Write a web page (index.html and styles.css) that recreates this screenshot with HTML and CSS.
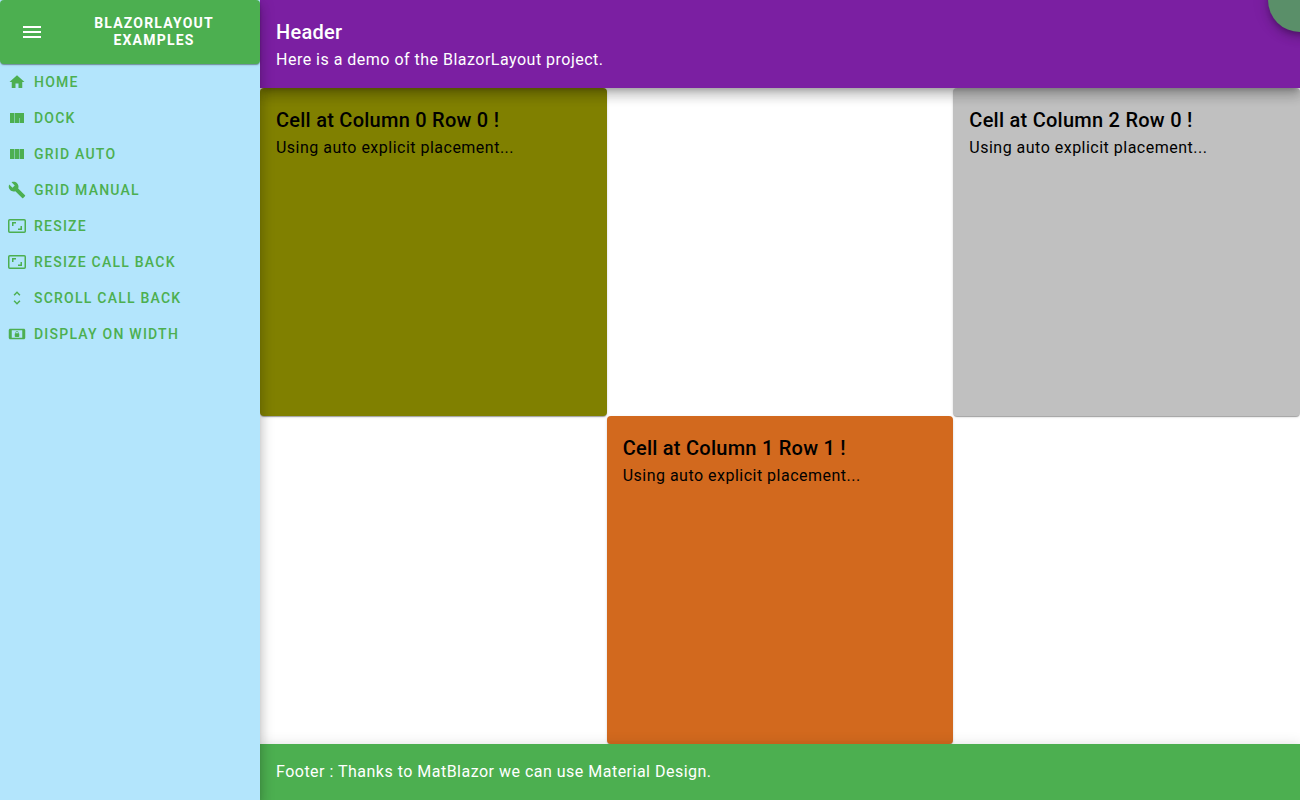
FILE: index.html
```html
<!DOCTYPE html>
<html lang="en">
<head>
<meta charset="utf-8">
<title>BlazorLayout Examples</title>
<link rel="stylesheet" href="styles.css">
</head>
<body>
<div class="app">
  <aside class="drawer">
    <div class="brand">
      <svg class="menu-icon" viewBox="0 0 24 24"><path d="M3 18h18v-2H3v2zm0-5h18v-2H3v2zm0-7v2h18V6H3z"/></svg>
      <div class="brand-title">BlazorLayout Examples</div>
    </div>
    <nav class="nav">
      <a class="nav-item"><svg viewBox="0 0 24 24"><path d="M10 20v-6h4v6h5v-8h3L12 3 2 12h3v8z"/></svg>Home</a>
      <a class="nav-item"><svg viewBox="0 0 18 18"><path d="M2 4h4.500v10H2zM7 4h9v10h-4.300V9h-.5v5H7z"/></svg>Dock</a>
      <a class="nav-item"><svg viewBox="0 0 18 18"><path d="M2 4h4.500v10H2zM7 4h4.200v10H7zM11.700 4H16v10h-4.300z"/></svg>Grid Auto</a>
      <a class="nav-item"><svg viewBox="0 0 24 24"><path d="M22.7 19l-9.1-9.1c.9-2.3.4-5-1.5-6.9-2-2-5-2.4-7.4-1.3L9 6 6 9 1.6 4.7C.4 7.1.9 10.1 2.9 12.1c1.9 1.9 4.6 2.4 6.9 1.5l9.1 9.1c.4.4 1 .4 1.4 0l2.3-2.3c.5-.4.5-1.1.1-1.4z"/></svg>Grid Manual</a>
      <a class="nav-item"><svg viewBox="0 0 18 18"><rect class="frame" x=".75" y="2.750" width="16.500" height="12.500" rx="1"/><path d="M4 5h4v1.500H5.500V9H4zM14 13h-4v-1.500h2.500V9H14z"/></svg>Resize</a>
      <a class="nav-item"><svg viewBox="0 0 18 18"><rect class="frame" x=".75" y="2.750" width="16.500" height="12.500" rx="1"/><path d="M4 5h4v1.500H5.500V9H4zM14 13h-4v-1.500h2.500V9H14z"/></svg>Resize Call Back</a>
      <a class="nav-item"><svg viewBox="0 0 24 24"><path d="M12 5.830L15.170 9l1.410-1.410L12 3 7.410 7.590 8.830 9 12 5.830zm0 12.340L8.830 15l-1.410 1.410L12 21l4.590-4.590L15.170 15 12 18.170z"/></svg>Scroll Call Back</a>
      <a class="nav-item"><svg viewBox="0 0 24 24"><path d="M10 16h4c.55 0 1-.45 1-1v-3c0-.55-.45-1-1-1v-1c0-1.110-.9-2-2-2s-2 .89-2 2v1c-.55 0-1 .45-1 1v3c0 .55.45 1 1 1zm.8-6c0-.66.54-1.200 1.200-1.200s1.200.54 1.200 1.200v1h-2.400v-1zM21 5H3c-1.100 0-2 .9-2 2v10c0 1.100.9 2 2 2h18c1.100 0 2-.9 2-2V7c0-1.100-.9-2-2-2zm-2 12H5V7h14v10z"/></svg>Display on Width</a>
    </nav>
  </aside>
  <div class="main">
    <header class="header">
      <h6 class="title">Header</h6>
      <p class="text">Here is a demo of the BlazorLayout project.</p>
      <div class="fab"></div>
    </header>
    <main class="grid">
      <section class="cell cell-olive">
        <h6 class="title">Cell at Column 0 Row 0 !</h6>
        <p class="text">Using auto explicit placement...</p>
      </section>
      <section class="cell cell-silver">
        <h6 class="title">Cell at Column 2 Row 0 !</h6>
        <p class="text">Using auto explicit placement...</p>
      </section>
      <section class="cell cell-chocolate">
        <h6 class="title">Cell at Column 1 Row 1 !</h6>
        <p class="text">Using auto explicit placement...</p>
      </section>
    </main>
    <footer class="footer">
      <p class="text">Footer : Thanks to MatBlazor we can use Material Design.</p>
    </footer>
  </div>
</div>
</body>
</html>
```
FILE: styles.css
```css
* { box-sizing: border-box; }
body { margin: 0; font-family: Roboto, sans-serif; overflow: hidden; }
.app { display: flex; width: 1300px; height: 800px; overflow: hidden; }
.drawer {
  position: relative;
  z-index: 3;
  width: 260px;
  flex: none;
  background: #b3e5fc;
  box-shadow: 0 5px 5px -3px rgba(0,0,0,.2), 0 8px 10px 1px rgba(0,0,0,.14), 0 3px 14px 2px rgba(0,0,0,.12);
}
.brand {
  display: flex;
  align-items: center;
  height: 64px;
  padding-left: 20px;
  border-radius: 4px;
  color: #fff;
  background: #4caf50;
  box-shadow: 0 2px 1px -1px rgba(0,0,0,.2), 0 1px 1px 0 rgba(0,0,0,.14), 0 1px 3px 0 rgba(0,0,0,.12);
}
.menu-icon { width: 24px; height: 24px; fill: #fff; }
.brand-title {
  width: 140px;
  margin-left: 40px;
  text-align: center;
  text-transform: uppercase;
  font-size: 14px;
  font-weight: 700;
  line-height: 17px;
  letter-spacing: 1.2px;
}
.nav { display: flex; flex-direction: column; }
.nav-item {
  display: flex;
  align-items: center;
  gap: 8px;
  height: 36px;
  padding-left: 8px;
  color: #4caf50;
  font-size: 14px;
  font-weight: 500;
  letter-spacing: 1.23px;
  text-transform: uppercase;
}
.nav-item svg { width: 18px; height: 18px; fill: #4caf50; }
.nav-item .frame { fill: none; stroke: #4caf50; stroke-width: 1.5px; }
.main { flex: 1; display: flex; flex-direction: column; min-width: 0; }
.header, .footer {
  position: relative;
  z-index: 2;
  flex: none;
  padding: 16px;
  color: #fff;
  box-shadow: 0 5px 5px -3px rgba(0,0,0,.2), 0 8px 10px 1px rgba(0,0,0,.14), 0 3px 14px 2px rgba(0,0,0,.12);
}
.header { height: 88px; background: #7b1fa2; }
.footer { height: 56px; background: #4caf50; }
.title { margin: 0; font-size: 20px; font-weight: 500; line-height: 32px; letter-spacing: .25px; }
.text { margin: 0; font-size: 16px; font-weight: 400; line-height: 24px; letter-spacing: .49px; }
.fab {
  position: absolute;
  top: -32px;
  right: -32px;
  width: 64px;
  height: 64px;
  border-radius: 50%;
  background: #5a8f69;
  box-shadow: 0 3px 5px -1px rgba(0,0,0,.2), 0 6px 10px 0 rgba(0,0,0,.14), 0 1px 18px 0 rgba(0,0,0,.12);
}
.grid { flex: 1; display: grid; grid-template: 1fr 1fr / 1fr 1fr 1fr; background: #fff; }
.cell {
  padding: 16px;
  border-radius: 4px;
  color: #000;
  box-shadow: 0 2px 1px -1px rgba(0,0,0,.2), 0 1px 1px 0 rgba(0,0,0,.14), 0 1px 3px 0 rgba(0,0,0,.12);
}
.cell-olive { background: #808000; }
.cell-silver { grid-column: 3; background: #c0c0c0; }
.cell-chocolate { grid-area: 2 / 2; background: #d2691e; }
```
